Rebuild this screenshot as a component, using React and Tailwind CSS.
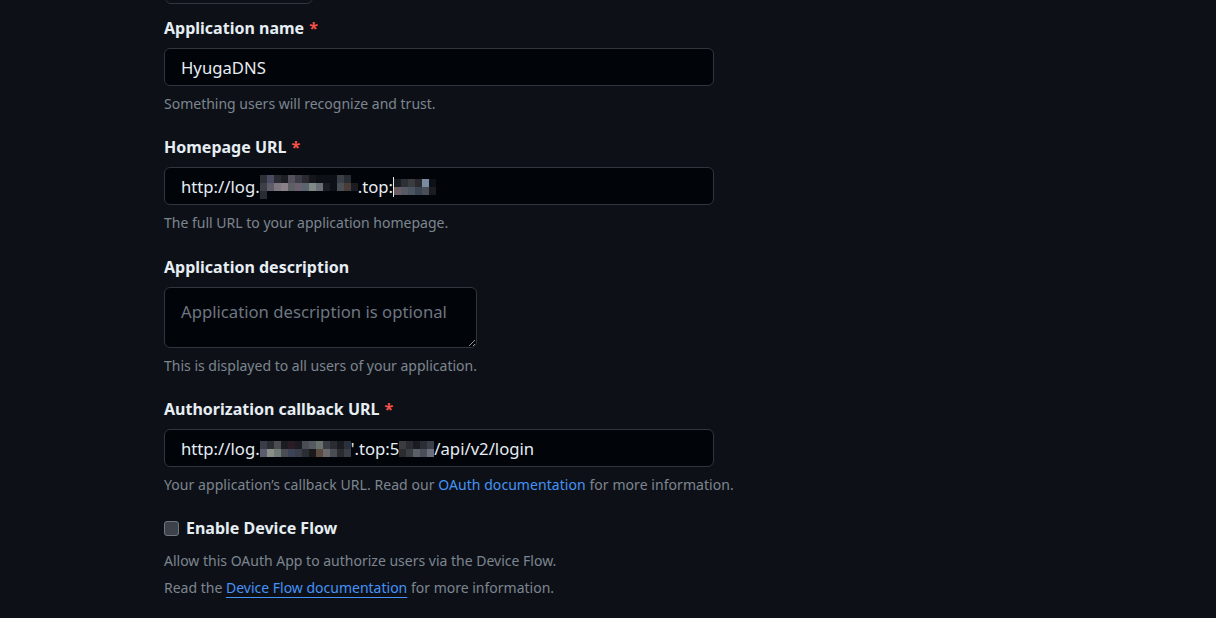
import React from "react";

function Mosaic({ cols, cell = 7, rowH = 8 }) {
  return (
    <span className="inline-flex align-[-5px]">
      {cols.map((c, i) => (
        <span key={i} className="flex flex-col">
          {c.map((col, j) => (
            <span key={j} style={{ width: cell, height: rowH, background: col }} />
          ))}
        </span>
      ))}
    </span>
  );
}

function Label({ children, required }) {
  return (
    <div className="text-[16px] leading-[24px] font-bold text-[#e6edf3]">
      {children}
      {required && <span className="text-[#f85149] ml-[5px]">*</span>}
    </div>
  );
}

function Hint({ children }) {
  return <div className="mt-[7px] text-[14px] leading-[21px] text-[#7d8590]">{children}</div>;
}

function Field({ children }) {
  return (
    <div className="mt-[8px] w-[550px] h-[38px] rounded-[6px] border border-[#30363d] bg-[#010409] pl-[16px] pt-[2px] flex items-center text-[16.7px] text-[#e6edf3] whitespace-nowrap">
      {children}
    </div>
  );
}

const m1 = [
  ["#2e3038", "#3d3f47", "#2a2c33"],
  ["#4b4a63", "#5c5d68"],
  ["#2a2b33", "#7e7680"],
  ["#1d1f26", "#8a8088"],
  ["#55505a", "#5c6062"],
  ["#3a3d45", "#6c6070"],
  ["#2a2a30", "#5b6570"],
  ["#15171c", "#7f8a86"],
  ["#0d1117", "#6a7075"],
  ["#0d1117", "#1a1d24"],
  ["#0d1117", "#0d1117"],
  ["#3a3e45", "#4a4e55"],
  ["#2a2c33", "#4a3c38"],
  ["#010409", "#1a1c22"],
];
const m2 = [
  ["#1a1c24", "#6a5c60"],
  ["#2e3038", "#555a66"],
  ["#3a3c40", "#4a5460"],
  ["#2a2a2e", "#3a4450"],
  ["#7a8aa0", "#4a4e58"],
  ["#0d1117", "#1a1c22"],
];
const m3 = [
  ["#3a3c48", "#5a5c70"],
  ["#2a2c34", "#8a9088"],
  ["#4a4c50", "#707a76"],
  ["#1a1c22", "#4a4e54"],
  ["#2a1c24", "#3a4456"],
  ["#1a1c22", "#3a3e48"],
  ["#4a4c56", "#2a2e34"],
  ["#555a60", "#1a1a1c"],
  ["#6a7270", "#5a4a40"],
  ["#3a3e44", "#6a6a6a"],
  ["#2a2c34", "#4a4e54"],
  ["#1a1c22", "#2a2c30"],
  ["#2a3038", "#3a3e48"],
];
const m4 = [
  ["#3a3c40", "#2a2c30"],
  ["#2a2c34", "#3a3e44"],
  ["#1a1c22", "#5a6068"],
  ["#2a2e36", "#4a4e58"],
  ["#3a3e48", "#6a6e7a"],
];

export default function App() {
  return (
    <div className="w-[1216px] h-[618px] overflow-hidden bg-[#0d1117] font-['Noto_Sans',sans-serif]">
      <div className="pl-[164px]">
        <div className="ml-[1px] w-[148px] h-[34px] -mt-[30px] rounded-[6px] border border-[#30363d] bg-[#0d1117]" />
        <div className="mt-[12px]">
          <Label required>Application name</Label>
          <Field>HyugaDNS</Field>
          <Hint>Something users will recognize and trust.</Hint>
        </div>
        <div className="mt-[21px]">
          <Label required>Homepage URL</Label>
          <Field>
            <span>http://log.</span>
            <Mosaic cols={m1} />
            <span>.top:</span>
            <span className="inline-block w-[1px] h-[20px] bg-[#e6edf3]" />
            <Mosaic cols={m2} />
          </Field>
          <Hint>The full URL to your application homepage.</Hint>
        </div>
        <div className="mt-[22px]">
          <Label>Application description</Label>
          <textarea
            placeholder="Application description is optional"
            className="mt-[8px] block w-[313px] h-[61px] rounded-[6px] border border-[#30363d] bg-[#010409] px-[16px] py-[12px] text-[16.7px] leading-[24px] text-[#e6edf3] placeholder:text-[#6e7681] outline-none [color-scheme:dark] resize-y"
          />
          <Hint>This is displayed to all users of your application.</Hint>
        </div>
        <div className="mt-[21px]">
          <Label required>Authorization callback URL</Label>
          <Field>
            <span>http://log.</span>
            <Mosaic cols={m3} />
            <span>'.top:5</span>
            <Mosaic cols={m4} />
            <span>/api/v2/login</span>
          </Field>
          <div className="mt-[7px] text-[14px] leading-[21px] tracking-[0.06px] text-[#7d8590]">
            Your application’s callback URL. Read our{" "}
            <span className="text-[#4493f8]">OAuth documentation</span> for more information.
          </div>
        </div>
        <div className="mt-[21px] flex items-center gap-[7px]">
          <span className="w-[15px] h-[15px] rounded-[3px] border border-[#6e7681] bg-[#3d4148]" />
          <span className="text-[16px] leading-[24px] font-bold text-[#e6edf3]">Enable Device Flow</span>
        </div>
        <div className="mt-[10px] text-[14px] leading-[21px] text-[#7d8590]">
          Allow this OAuth App to authorize users via the Device Flow.
        </div>
        <div className="mt-[6px] text-[14px] leading-[21px] text-[#7d8590]">
          Read the{" "}
          <span className="text-[#4493f8] underline underline-offset-[4px]">Device Flow documentation</span>{" "}
          for more information.
        </div>
      </div>
    </div>
  );
}
